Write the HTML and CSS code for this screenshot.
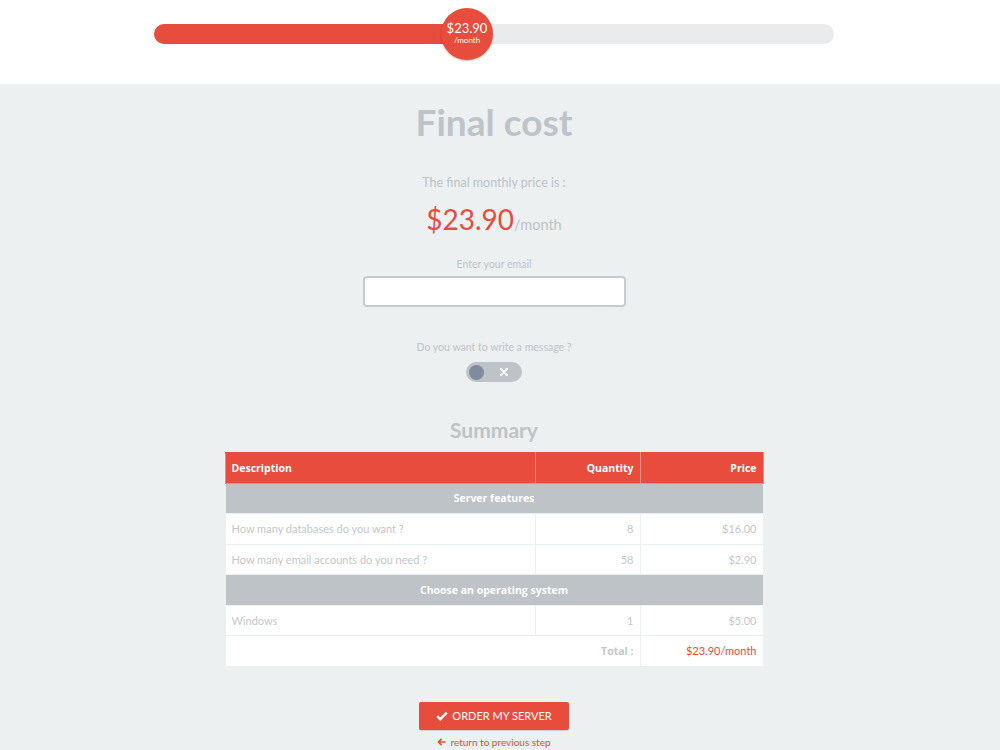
FILE: index.html
```html
<!DOCTYPE html>
<html lang="en">
<head>
  <meta charset="UTF-8" />
  <title>Final cost</title>
  <link rel="stylesheet" href="styles.css">
</head>
<body>
  <div class="top-band">
    <div class="slider">
      <div class="slider-fill" style="width: 313px;">
        <div class="slider-handle">
          <span class="handle-price">$23.90</span>
          <span class="handle-unit">/month</span>
        </div>
      </div>
    </div>
  </div>

  <div class="content">
    <h1 class="title">Final cost</h1>
    <p class="lead">The final monthly price is :</p>
    <p class="big-price">$23.90<span>/month</span></p>

    <label class="small-label" for="email">Enter your email</label>
    <input id="email" class="email-input" type="text" />

    <p class="small-label message-label">Do you want to write a message ?</p>
    <div class="toggle">
      <span class="toggle-knob"></span>
      <svg class="toggle-x" width="8" height="8" viewBox="0 0 8 8"><path d="M1 1 L7 7 M7 1 L1 7" stroke="#fff" stroke-width="2" stroke-linecap="round"/></svg>
    </div>

    <h2 class="subtitle">Summary</h2>
    <table class="summary">
      <thead>
        <tr>
          <th class="col-desc">Description</th>
          <th class="col-qty">Quantity</th>
          <th class="col-price">Price</th>
        </tr>
      </thead>
      <tbody>
        <tr class="section"><td colspan="3">Server features</td></tr>
        <tr><td>How many databases do you want ?</td><td class="num">8</td><td class="num">$16.00</td></tr>
        <tr><td>How many email accounts do you need ?</td><td class="num">58</td><td class="num">$2.90</td></tr>
        <tr class="section"><td colspan="3">Choose an operating system</td></tr>
        <tr><td>Windows</td><td class="num">1</td><td class="num">$5.00</td></tr>
        <tr class="total"><td colspan="2" class="num total-label">Total :</td><td class="num total-value">$23.90/month</td></tr>
      </tbody>
    </table>

    <button class="order-btn">
      <svg width="12" height="10" viewBox="0 0 12 10"><path d="M1.2 5.2 L4.3 8.2 L10.8 1.6" fill="none" stroke="#fff" stroke-width="2.4"/></svg>
      ORDER MY SERVER
    </button>
    <a class="back-link" href="#">
      <svg width="9" height="8" viewBox="0 0 9 8"><path d="M8.5 4 H1.8 M4.6 0.9 L1.4 4 L4.6 7.1" fill="none" stroke="#e74c3c" stroke-width="1.6"/></svg>
      return to previous step
    </a>
  </div>
</body>
</html>
```

FILE: styles.css
```css
html, body { margin: 0; padding: 0; }
body { font-family: Lato, "Open Sans", Arial, sans-serif; background: #ecf0f1; color: #bdc3c7; }

.top-band { background: #fff; height: 84px; display: flex; justify-content: center; padding: 24px 12px 0 0; box-sizing: border-box; }
.slider { width: 680px; height: 20px; background: #eaebed; border-radius: 10px; }
.slider-fill { height: 20px; background: #e74c3c; border-radius: 10px 0 0 10px; position: relative; }
.slider-handle {
  position: absolute; right: -26px; top: -16px;
  width: 52px; height: 52px; border-radius: 50%;
  background: #e74c3c; box-shadow: 0 1px 2px rgba(0,0,0,0.25);
  display: flex; flex-direction: column; align-items: center; justify-content: center;
  color: #fff;
}
.handle-price { font-size: 13px; line-height: 14px; margin-top: -2px; }
.handle-unit { font-size: 8px; line-height: 10px; }

.content { display: flex; flex-direction: column; align-items: center; padding: 0 12px 20px 0; }
.title { font-size: 37px; font-weight: 700; margin: 16px 0 0; line-height: 44px; color: #bdc3c7; }
.lead { font-size: 12.5px; margin: 31px 0 0; line-height: 16px; color: #bdc3c7; }
.big-price { font-size: 28px; color: #e74c3c; margin: 11px 0 0; line-height: 34px; }
.big-price span { font-size: 14.5px; color: #bdc3c7; }

.small-label { font-size: 10.5px; line-height: 14px; color: #bdc3c7; display: block; margin: 0; }
label.small-label { margin-top: 15px; }
.email-input {
  width: 263px; height: 31px; box-sizing: border-box; margin-top: 5px;
  border: 2px solid #c6cbcf; border-radius: 4px; background: #fff; outline: none;
}
.message-label { margin-top: 33px; }
.toggle {
  width: 56px; height: 20px; margin-top: 8px; border-radius: 10px; background: #bdc3c7;
  display: flex; align-items: center; justify-content: space-between; padding: 0 14px 0 3px; box-sizing: border-box;
}
.toggle-knob { width: 15px; height: 15px; border-radius: 50%; background: #7f8c9d; }

.subtitle { font-size: 21px; font-weight: 700; margin: 35px 0 0; line-height: 26px; color: #bdc3c7; }

.summary { width: 539px; margin-top: 9px; border-collapse: collapse; background: #fff; font-size: 11px; }
.summary th, .summary td { height: 30.5px; padding: 0 6px; border: 1px solid #ecf0f1; box-sizing: border-box; }
.summary th { background: #e74c3c; color: #fff; font-family: "Open Sans", Arial, sans-serif; font-weight: 700; font-size: 10.5px; border-color: #ee8a80; border-top-color: #e74c3c; }
.col-desc { text-align: left; width: 310px; }
.col-qty { text-align: right; width: 105px; }
.col-price { text-align: right; }
.summary td { color: #c3c8cc; }
.summary .num { text-align: right; }
.summary .section td { background: #bdc3c7; color: #fff; text-align: center; font-family: "Open Sans", Arial, sans-serif; font-weight: 700; font-size: 10.5px; border-color: #ecf0f1; }
.total-label { font-family: "Open Sans", Arial, sans-serif; font-weight: 700; font-size: 10.5px; }
.summary .total-value { color: #e74c3c; }

.order-btn {
  margin-top: 35px; width: 150px; height: 28px; border: none; border-radius: 2px;
  background: #e74c3c; color: #fff; font-family: Lato, Arial, sans-serif; font-size: 11px;
  display: flex; align-items: center; justify-content: center; gap: 4px; cursor: pointer;
  box-shadow: 0 1px 1px rgba(0,0,0,0.15);
}
.back-link { margin-top: 6px; font-size: 10px; color: #e74c3c; text-decoration: none; display: flex; align-items: center; gap: 4px; }
```
